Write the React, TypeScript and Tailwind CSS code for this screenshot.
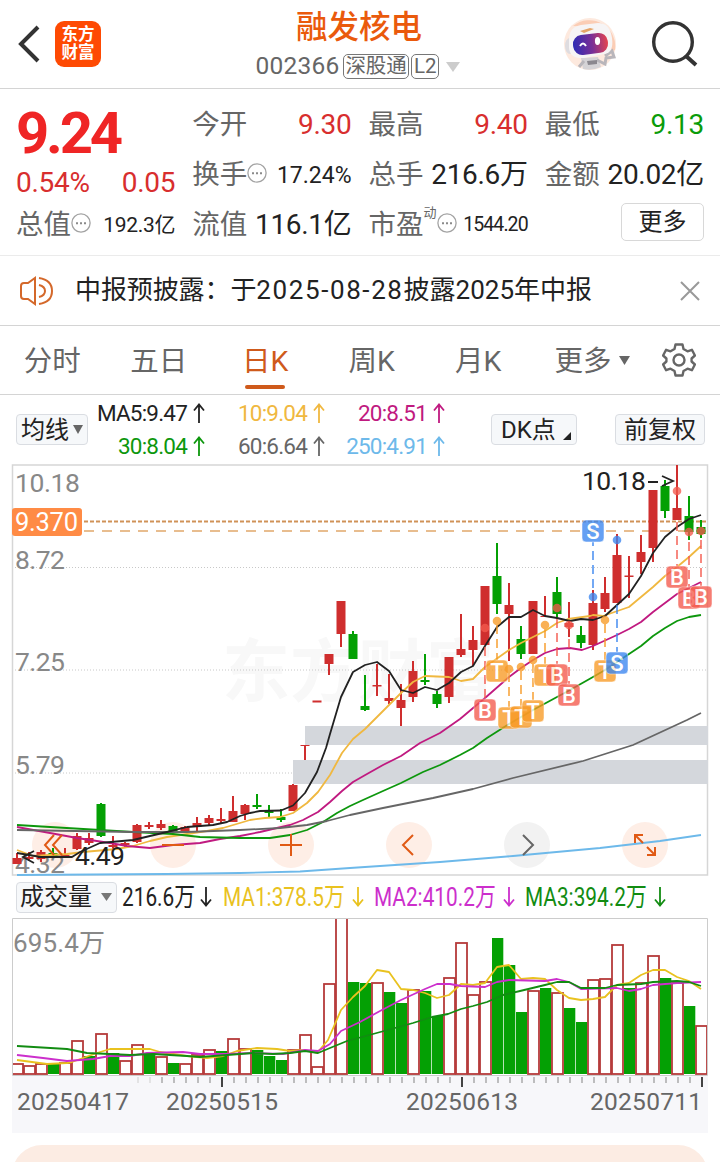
import type { ReactNode } from "react";

const UP = "#cf2e2e";
const DOWN = "#04a004";

// [body top, body bottom, wick top, wick bottom, 1 = rising]
const candles: number[][] = [
  [858, 864, 853, 864, 1], [857, 859, 852, 861, 1], [852, 859, 850, 862, 1], [853, 856, 848, 858, 0],
  [855, 857, 848, 858, 1], [836, 849, 833, 850, 1], [838, 843, 833, 845, 1], [804, 836, 803, 837, 0],
  [845, 847, 836, 849, 1], [843, 845, 842, 847, 1], [825, 842, 824, 843, 1], [825, 827, 822, 829, 1],
  [824, 828, 820, 830, 1], [826, 831, 825, 831, 0], [827, 831, 826, 831, 1], [823, 827, 817, 831, 1],
  [818, 823, 815, 825, 1], [819, 821, 808, 823, 1], [811, 822, 796, 822, 1], [805, 814, 804, 820, 1],
  [805, 807, 794, 809, 0], [810, 813, 805, 817, 0], [817, 820, 809, 822, 0], [785, 811, 784, 811, 1],
  [745, 746, 745, 760, 1], [700.5, 702.5, 701, 702, 1], [654, 664, 654, 675, 1], [601, 634, 601, 647, 1],
  [634, 659, 631, 659, 0], [706, 710, 675, 711, 0], [685, 686.5, 664, 696, 1], [698, 701, 674, 704, 1],
  [700, 708, 684, 726, 1], [671, 697, 661, 702, 1], [680, 682, 654, 685, 0], [694, 704, 691, 708, 0],
  [657, 697, 657, 703, 1], [649, 655, 614, 657, 1], [640, 650, 626, 666, 1], [586, 645, 586, 645, 1],
  [576, 604, 543, 614, 0], [605, 614, 583, 661, 1], [639, 654, 626, 659, 0], [601, 654, 601, 654, 1],
  [616, 617, 596, 617, 1], [592, 614, 577, 617, 0], [623, 627, 602, 637, 1], [635, 643, 626, 648, 0],
  [603, 645, 590, 650, 1], [593, 609, 577, 612, 1], [555, 603, 534, 603, 1], [575.5, 577, 556, 598, 1],
  [552, 562, 535, 574, 1], [490, 548, 490, 562, 1], [486, 511, 480, 518, 0], [508, 520, 465, 520, 1],
  [516, 532, 496, 540, 0], [527, 534, 520, 538, 0],
];

const priceLines = [
  { color: "#f0b840", d: "17,850 33,856 67,854 83,852 117,849 133,846 150,841 167,837 187,834 207,831 223,828 240,823 250,820 265,818 280,817 293,813 307,803 318,792 330,775 342,753 353,739 365,729 377,717 389,705 401,693 413,682 425,676 449,677 461,681 473,679 485,667 509,650 521,643 545,631 557,623 568,619 590,616 593,615 603,616 629,607 641,597 653,587 665,576 677,567 689,557 701,546" },
  { color: "#c01a80", d: "17,827 50,833 77,838 110,843 127,846 150,848 173,845 200,843 220,839 240,836 260,832 277,828 290,825 303,820 318,812 330,802 342,791 353,782 367,774 383,765 401,756 420,743 440,733 460,719 485,698 509,677 521,668 533,660 545,653 557,649 570,648 582,650 593,646 617,635 629,629 641,622 653,612 665,603 677,594 689,588 701,582" },
  { color: "#0d970d", d: "17,825 50,827 100,830 133,832 173,834 200,837 240,838 270,838 290,835 307,830 323,822 337,813 350,806 363,800 383,791 401,783 423,772 440,765 460,755 473,748 487,738 509,724 533,710 557,697 570,690 593,677 605,670 629,654 641,646 653,636 665,628 677,621 689,617 701,615" },
  { color: "#666666", d: "17,830 133,832 187,832 240,830 280,828 307,825 327,821 350,815 383,808 433,798 473,789 513,778 583,761 633,745 687,720 701,713" },
  { color: "#6db9ea", d: "17,875 167,874 240,873 300,871.5 350,868 440,862 513,856 600,848 660,841 701,835" },
  { color: "#222222", d: "17,853 29,855 41,857 72,857 80,852 100,843 133,840 167,832 187,827 213,825 227,822 240,816 250,813 260,811 281,810.5 293,805.5 305,793 317,772 326,748 330,734 341,697 353,672 365,665 377,662 389,671 401,690 413,693 425,687 437,690 449,683 461,672 473,666 485,646 497,627 509,617 521,617 533,610 545,616 557,618 570,621 581,619 593,620 605,616 617,605 629,594 641,576 653,553 665,537 677,527 689,519 701,515" },
];

// x, dot y, badge y, letter
const marks: [number, number, number, string][] = [
  [485, 628, 710, "B"], [497, 621, 671, "T"], [509, 669, 718, "T"], [521, 667, 717, "T"],
  [533, 660, 711, "T"], [545, 625, 675, "T"], [557, 608, 675, "B"], [569, 625, 695, "B"],
  [593, 597, 531, "S"], [605, 620, 671, "T"], [617, 540, 663, "S"], [677, 491, 577, "B"],
  [689, 532, 598, "B"], [701, 531, 597, "B"],
];
const markColor: Record<string, string> = { B: "#f4594d", T: "#f89a25", S: "#3b86f0" };

// the leader starts where the candle ends
function leaderStart(x: number, dot: number, badge: number) {
  const [, , high, low] = candles[(x - 17) / 12];
  return badge > dot ? Math.max(dot + 4, low + 2) : Math.min(dot - 4, high - 2);
}

// [top of bar, 1 = rising]
const volumes: [number, number][] = [
  [1064, 1], [1066, 1], [1064, 1], [1064, 0], [1063, 1], [1041, 1], [1056, 0], [1034, 1], [1053, 0], [1061, 1],
  [1045, 1], [1053, 0], [1057, 1], [1063, 0], [1064, 1], [1055, 1], [1050, 1], [1051, 0], [1039, 1], [1049, 1],
  [1050, 0], [1056, 0], [1060, 0], [1050, 1], [1035, 1], [1067, 1], [984, 1], [910, 1], [982, 0], [983, 0],
  [983, 1], [992, 0], [1003, 0], [990, 1], [991, 0], [1016, 0], [978, 1], [943, 1], [995, 1], [982, 1],
  [938, 0], [965, 0], [1012, 0], [991, 1], [988, 0], [993, 1], [1008, 0], [1022, 0], [980, 1], [979, 1],
  [945, 1], [988, 0], [983, 1], [956, 1], [978, 0], [983, 1], [1006, 0], [1026, 1],
];

const volumeLines = [
  { color: "#e9c21f", d: "17,1060 47,1064 67,1063 72,1062 83,1058 97,1053 110,1049 150,1049 160,1052 187,1056 207,1058 223,1056 237,1051 257,1048 277,1049 290,1051 305,1050 317,1053 328,1040 341,1010 353,997 365,986 377,970 389,972 401,989 413,990 425,993 437,998 449,995 461,984 473,985 485,983 497,967 509,965 521,979 533,978 545,979 557,990 569,998 581,1000 593,999 605,997 617,985 629,983 641,975 653,970 665,970 677,977 689,981 701,989" },
  { color: "#cc2fcc", d: "17,1055 43,1058 67,1061 93,1059 110,1056 130,1056 147,1053 183,1052 200,1054 227,1054 253,1053 283,1054 305,1050 318,1051 330,1044 341,1031 360,1022 380,1011 401,1000 425,989 437,984 450,984 461,986 485,987 497,982 509,980 545,981 557,979 569,982 581,989 617,988 629,991 641,989 653,985 677,983 701,982" },
  { color: "#128c12", d: "17,1046 67,1049 87,1053 110,1054 130,1055 153,1054 187,1056 200,1057 227,1055 253,1053 273,1054 290,1053 305,1051 318,1053 330,1048 347,1041 373,1034 395,1028 413,1023 432,1017 448,1014 461,1009 473,1006 487,1002 503,995 520,991 545,985 557,982 569,982 581,988 605,988 617,985 641,984 653,982 677,981 689,982 701,986" },
];

function Arrow({ down }: { down?: boolean }) {
  return (
    <svg width="12" height="20" viewBox="0 0 12 20" fill="none" stroke="currentColor" strokeWidth="1.8" className="shrink-0">
      {down ? <path d="M6 0v18.500M1 12.500l5 6 5-6" /> : <path d="M6 20V1.500M1 7.500l5-6 5 6" />}
    </svg>
  );
}

function Triangle({ w = 10, h = 9 }: { w?: number; h?: number }) {
  return (
    <svg width={w} height={h} viewBox="0 0 10 9" preserveAspectRatio="none" fill="currentColor" className="shrink-0">
      <path d="M0 0h10L5 9z" />
    </svg>
  );
}

function Dots() {
  return (
    <svg width="20" height="20" viewBox="0 0 20 20" className="mb-[5px] shrink-0">
      <circle cx="10" cy="10" r="9.1" fill="none" stroke="#a3a3a3" strokeWidth="1.3" />
      <path d="M5 9.200h2v2H5zM9 9.200h2v2H9zM13 9.200h2v2h-2z" fill="#8a8a8a" />
    </svg>
  );
}

function Cell({ label, value, className = "text-[28px] tracking-[-0.3px] text-[#222]" }: { label: ReactNode; value: string; className?: string }) {
  return (
    <div className="flex h-[50px] items-center justify-between whitespace-nowrap">
      <span className="flex items-center text-[27.5px] text-[#666]">{label}</span>
      <span className={className}>{value}</span>
    </div>
  );
}

function Robot() {
  return (
    <svg width="54" height="54" viewBox="0 0 54 54">
      <circle cx="27" cy="27" r="26" fill="#fde9de" />
      <path d="M10 9a26 26 0 0 1 42 24l-8 3L40 10z" fill="#fbcdb5" />
      <path d="M18 41l17-1 3 10q-9 4-18 2z" fill="#d5d3d6" />
      <path d="M21 44l-5 6M34 43l8 4 1-6 8-1-2-6-7 5" fill="none" stroke="#b9b6bb" strokeWidth="3" />
      <path d="M24 44l10-1v4l-9 1z" fill="#8b888f" />
      <ellipse cx="7" cy="29" rx="5" ry="8" fill="#dedce0" />
      <path d="M6 23Q6 10 18 8l17-2q12 0 14 15t-8 16L21 41Q7 42 6 31z" fill="#f6f4f5" />
      <path d="M17 14l10-3 4 1-10 4z" fill="#e5a468" />
      <rect x="10" y="17" width="35" height="20" rx="9" transform="rotate(-7 27 27)" fill="url(#visor)" />
      <path d="M17 29q3-5 6 0" fill="none" stroke="#fff" strokeWidth="2" />
      <ellipse cx="34.500" cy="24" rx="2.600" ry="4" fill="#fff" />
      <defs>
        <linearGradient id="visor">
          <stop offset="0" stopColor="#2e2bb4" />
          <stop offset="0.55" stopColor="#7a2f96" />
          <stop offset="1" stopColor="#e4434f" />
        </linearGradient>
      </defs>
    </svg>
  );
}

function Header() {
  return (
    <header className="flex h-[89px] items-center border-b border-[#d4d4d4]">
      <svg width="22" height="38" viewBox="0 0 22 38" fill="none" stroke="#333" strokeWidth="4" className="ml-[18px]">
        <path d="M20 2L3 19l17 17" />
      </svg>
      <div className="ml-[15px] flex size-[46px] flex-col items-center justify-center rounded-[9px] bg-[#fe4a03] text-[16.5px] leading-[18px] font-bold text-white">
        <span>东方</span>
        <span>财富</span>
      </div>
      <div className="ml-[155px] flex w-[206px] flex-col items-center">
        <h1 className="text-[31.500px] leading-[38px] font-medium text-[#ea5a0c]">融发核电</h1>
        <div className="mt-[7px] -ml-[2px] flex h-[26px] items-center whitespace-nowrap text-[#666]">
          <span className="text-[24.5px] leading-none tracking-[0.2px]">002366</span>
          <span className="ml-1 flex h-[25px] items-center rounded-[5px] border-[1.5px] border-[#777] px-px text-[20.5px]">深股通</span>
          <span className="ml-[2px] flex h-[25px] items-center rounded-[5px] border-[1.5px] border-[#777] px-[2px] text-[20.5px]">L2</span>
          <span className="ml-[7px] text-[#ccc]">
            <Triangle w={14} h={10} />
          </span>
        </div>
      </div>
      <div className="ml-[101px]">
        <Robot />
      </div>
      <svg width="48" height="48" viewBox="0 0 48 48" fill="none" stroke="#333" strokeWidth="3.400" className="ml-[34px]">
        <circle cx="22" cy="22" r="19.300" />
        <path d="M35 36l10 9" strokeWidth="4" />
      </svg>
    </header>
  );
}

function Quote() {
  return (
    <section className="grid h-[167px] grid-cols-4 gap-[17px] border-b border-[#ebebeb] px-[16px] pt-[11px] leading-none">
      <div>
        <div className="flex h-[66px] items-center text-[58px] font-bold tracking-[-3.200px] text-[#ef2525]">9.24</div>
        <div className="flex h-[34px] items-center justify-between text-[28px] text-[#d82e2e]">
          <span className="tracking-[-0.300px]">0.54%</span>
          <span className="tracking-[-0.300px]">0.05</span>
        </div>
        <Cell label={<>总值<Dots /></>} value="192.3亿" className="text-[21px] tracking-[-0.300px] text-[#222]" />
      </div>
      <div>
        <Cell label="今开" value="9.30" className="text-[28px] tracking-[-0.3px] text-[#d82e2e]" />
        <Cell label={<>换手<Dots /></>} value="17.24%" className="text-[23px] text-[#222]" />
        <Cell label="流值" value="116.1亿" />
      </div>
      <div>
        <Cell label="最高" value="9.40" className="text-[28px] tracking-[-0.3px] text-[#d82e2e]" />
        <Cell label="总手" value="216.6万" />
        <Cell label={<>市盈<sup className="relative -top-3 text-[13px]">动</sup><Dots /></>} value="1544.20" className="text-[19.5px] tracking-[-0.900px] text-[#222]" />
      </div>
      <div>
        <Cell label="最低" value="9.13" className="text-[28px] tracking-[-0.3px] text-[#0a9c0a]" />
        <Cell label="金额" value="20.02亿" />
        <div className="mt-[3px] ml-auto flex h-[38px] w-[83px] items-center justify-center rounded-[5px] border border-[#d8d8d8] text-[24px] text-[#222]">更多</div>
      </div>
    </section>
  );
}

function News() {
  return (
    <section className="flex h-[70px] items-center border-b border-[#d4d4d4] pr-5 pl-[19px]">
      <svg width="36" height="30" viewBox="0 0 36 30" fill="none" stroke="#d4682a" strokeWidth="2">
        <path d="M16 2v26l-7-5H5q-3 0-3-3V10q0-3 3-3h4z" />
        <path d="M20 9q6 1.500 6 6t-6 6M20 2q13 2 13 13T20 28" />
      </svg>
      <p className="ml-[20px] flex-1 text-[26px] whitespace-nowrap text-[#222]">
        <span className="tracking-[-0.1px]">中报预披露：于</span>
        <span className="tracking-[1.6px]">2025-08-28</span>披露2025年中报
      </p>
      <svg width="20" height="20" viewBox="0 0 20 20" stroke="#999" strokeWidth="2">
        <path d="M1 1l18 18M19 1L1 19" />
      </svg>
    </section>
  );
}

function Tabs() {
  return (
    <nav className="flex h-[69px] items-center border-b border-[#d4d4d4] text-[28.5px] text-[#666]">
      {["分时", "五日", "日K", "周K", "月K"].map((name) => (
        <div key={name} className={name === "日K" ? "relative flex w-[106.500px] justify-center pt-[5px] pr-[2px] text-[#cf5a1b]" : "flex w-[106.500px] justify-center pt-[5px] pr-[2px]"}>
          {name}
          {name === "日K" ? <span className="absolute -bottom-[5px] h-1 w-10 rounded-full bg-[#cf5a1b]" /> : null}
        </div>
      ))}
      <div className="ml-[22px] flex items-center gap-[7px]">
        <span className="pt-[5px]">更多</span>
        <Triangle w={11} h={9} />
      </div>
      <svg width="34" height="34" viewBox="0 0 34 34" fill="none" stroke="#666" strokeWidth="2.400" strokeLinejoin="round" className="ml-[32px]">
        <path d="M13.500 1.500h7l1 4.500 4 2.300 4.400-1.500 3 5.700-3.300 3v3l3.300 3-3 5.700-4.400-1.500-4 2.300-1 4.500h-7l-1-4.500-4-2.300-4.400 1.500-3-5.700 3.300-3v-3l-3.300-3 3-5.700 4.400 1.500 4-2.300z" />
        <circle cx="17" cy="17" r="5.500" />
      </svg>
    </nav>
  );
}

const averages = [
  { text: "MA5:9.47", color: "text-[#222]" },
  { text: "10:9.04", color: "text-[#f0b840]" },
  { text: "20:8.51", color: "text-[#c01a80]" },
  { text: "30:8.04", color: "text-[#0d970d]" },
  { text: "60:6.64", color: "text-[#666]" },
  { text: "250:4.91", color: "text-[#6db9ea]" },
];

function Toolbar() {
  return (
    <section className="flex h-[69px] items-center text-[24px] leading-none text-[#222]">
      <div className="ml-4 flex h-[31px] w-[72px] items-center justify-center gap-1 rounded border border-[#dadde2] bg-[#f6f8fa] whitespace-nowrap">
        <span>均线</span>
        <span className="text-[#666]"><Triangle /></span>
      </div>
      <div className="grid w-[357px] grid-cols-[117px_120px_120px] gap-y-[1px] text-[22.5px] tracking-[-0.8px]">
        {averages.map((a) => (
          <div key={a.text} className={`flex h-8 items-center justify-end gap-[6px] ${a.color}`}>
            <span>{a.text}</span>
            <Arrow />
          </div>
        ))}
      </div>
      <div className="ml-[46px] flex h-[31px] w-[86px] items-center rounded border border-[#dadde2] bg-[#f6f8fa] pl-[9px]">
        DK点
        <svg width="8" height="8" viewBox="0 0 8 8" className="mt-3 ml-[7px]"><path d="M8 0v8H0z" fill="#222" /></svg>
      </div>
      <div className="ml-[38px] flex h-[31px] w-[90px] items-center justify-center rounded border border-[#dadde2] bg-[#f6f8fa]">前复权</div>
    </section>
  );
}

function Candles() {
  return (
    <svg width="720" height="412" viewBox="0 464 720 412" className="block overflow-visible" fill="none">
      <text x="222" y="696" fontSize="68" fontWeight="700" fill="#f8f8f8" textLength="272">东方财富</text>
      <path d="M12 567.500h696M12 670h696M12 773h696" stroke="#c8c8c8" strokeDasharray="1 2" />
      <path d="M12.500 875V465h695v410z" stroke="#d6d6d6" strokeWidth="1.500" />
      <path d="M305 726h403v19H305zM293 760h415v24H293z" fill="#d4d7dc" />
      <path d="M84 521.500h624" stroke="#d09258" strokeWidth="1.800" strokeDasharray="4 2" />
      <path d="M84 531h624" stroke="#e8bd8f" strokeWidth="1.800" strokeDasharray="10 8" />
      {[55, 173, 291, 409, 527, 645].map((x) => (
        <circle key={x} cx={x} cy="845" r="23" fill={x === 527 ? "#f2f2f2" : "#feeee6"} />
      ))}
      <g fill="#888" fontSize="26.500">
        <text x="15" y="492" textLength="65">10.18</text>
        <text x="15" y="569" textLength="50">8.72</text>
        <text x="15" y="671" textLength="50">7.25</text>
        <text x="15" y="774" textLength="50">5.79</text>
        <text x="15" y="873" textLength="50">4.32</text>
      </g>
      {candles.map(([top, bottom, high, low, rising], i) => {
        const x = 17 + i * 12;
        return (
          <g key={i} fill={rising ? UP : DOWN}>
            <rect x={x - 1} y={high} width="2" height={low - high} />
            <rect x={x - 4.5} y={top} width="9" height={bottom - top} />
          </g>
        );
      })}
      {priceLines.map((line) => (
        <polyline key={line.color} points={line.d} stroke={line.color} strokeWidth="1.800" strokeLinejoin="round" />
      ))}
      <g fontSize="26.500" fill="#222">
        <text x="582" y="490" textLength="64">10.18</text>
        <text x="75" y="865" textLength="50">4.49</text>
      </g>
      <path d="M648 482h10M662 476l11 5-11 5M34 851l-11 6 11 6M38 857h34" stroke="#222" strokeWidth="1.800" />
      <rect x="12" y="508" width="70" height="28" rx="3" fill="#ff8b45" />
      <text x="15" y="531" fontSize="25.500" fill="#fff" textLength="63">9.370</text>
      {marks.map(([x, dot, badge, letter]) => (
        <g key={x} opacity="0.78">
          <path d={`M${x} ${leaderStart(x, dot, badge)}V${badge}`} stroke={markColor[letter]} strokeWidth="1.800" strokeDasharray="9 5" />
          <circle cx={x} cy={dot} r="4.300" fill={markColor[letter]} />
          <rect x={x - 11} y={badge - 11} width="22" height="22" rx="4" fill={markColor[letter]} stroke="#fff" strokeOpacity="0.5" />
          <text x={x} y={badge + 8} fontSize="22" fontWeight="500" textAnchor="middle" fill="#fff">{letter}</text>
        </g>
      ))}
      <g stroke="#e05a15" strokeWidth="2">
        <path d="M54 835l-9 10 9 10M62 835l-9 10 9 10M162 845h22M280 845h22M291 834v22M413 835l-10 10 10 10" />
        <path d="M635 843v-8h8M635 835l8 8M655 847v8h-8M655 855l-8-8" />
        <path d="M523 835l10 10-10 10" stroke="#666" />
      </g>
    </svg>
  );
}

const volumeAverages = [
  { text: "MA1:378.5万", color: "text-[#e9c21f]" },
  { text: "MA2:410.2万", color: "text-[#cc2fcc]" },
  { text: "MA3:394.2万", color: "text-[#128c12]" },
];

function VolumeLegend() {
  return (
    <section className="flex h-[42px] items-center leading-none whitespace-nowrap">
      <div className="ml-4 flex h-[31px] w-[101px] shrink-0 items-center gap-[9px] rounded border border-[#dadde2] bg-[#f6f8fa] pl-[3px] text-[24px] text-[#222]">
        成交量
        <span className="text-[#777]"><Triangle w={11} h={8} /></span>
      </div>
      <div className="ml-[5px] flex w-[101px] shrink-0 items-center text-[#222]">
        <span className="w-[78px] origin-left scale-x-[0.800] text-[26px]">216.6万</span>
        <Arrow down />
      </div>
      {volumeAverages.map((a) => (
        <div key={a.text} className={`flex w-[151px] shrink-0 items-center ${a.color}`}>
          <span className="w-[129px] origin-left scale-x-[0.800] text-[26px]">{a.text}</span>
          <Arrow down />
        </div>
      ))}
    </section>
  );
}

function Volume() {
  return (
    <svg width="720" height="215" viewBox="0 918 720 215" className="block" fill="none">
      <defs>
        <clipPath id="frame"><path d="M12 919h696v157H12z" /></clipPath>
      </defs>
      <path d="M12 1076h696v57H12z" fill="#f7f7fa" />
      <text x="13" y="952" fontSize="26" fill="#888" textLength="92">695.4万</text>
      <g clipPath="url(#frame)">
        {volumes.map(([top, rising], i) => {
          const x = 17 + i * 12;
          return rising ? (
            <rect key={i} x={x - 5} y={top} width="11" height={1074 - top} fill="#fff" stroke="#b53a3a" strokeWidth="1.800" />
          ) : (
            <rect key={i} x={x - 5} y={top} width="11.300" height={1074 - top} fill={DOWN} />
          );
        })}
        {volumeLines.map((line) => (
          <polyline key={line.color} points={line.d} stroke={line.color} strokeWidth="1.800" strokeLinejoin="round" />
        ))}
      </g>
      <path d="M12.500 1075.500v-157h695v157z" stroke="#ccc" />
      {Array.from({ length: 48 }, (_, i) => {
        const major = i === 7 || i === 27 || i === 47;
        return (
          <path
            key={i}
            d={`M${138 + i * 12} 1077v${major ? 10 : 6}`}
            stroke={major ? "#444" : i < 2 ? "#ddd" : "#aaa"}
            strokeWidth={major ? 2 : 1.5}
          />
        );
      })}
      <g fontSize="24.500" fill="#666">
        <text x="17" y="1110" textLength="112">20250417</text>
        <text x="166" y="1110" textLength="112">20250515</text>
        <text x="406" y="1110" textLength="112">20250613</text>
        <text x="590" y="1110" textLength="112">20250711</text>
      </g>
    </svg>
  );
}

export default function App() {
  return (
    <div className="h-[1162px] w-[720px] overflow-hidden bg-white font-[Roboto,'Noto_Sans_CJK_SC',sans-serif]">
      <Header />
      <Quote />
      <News />
      <Tabs />
      <Toolbar />
      <Candles />
      <VolumeLegend />
      <Volume />
      <div className="mx-3 mt-3 h-[60px] rounded-t-[30px] bg-[#fcece3]" />
    </div>
  );
}
